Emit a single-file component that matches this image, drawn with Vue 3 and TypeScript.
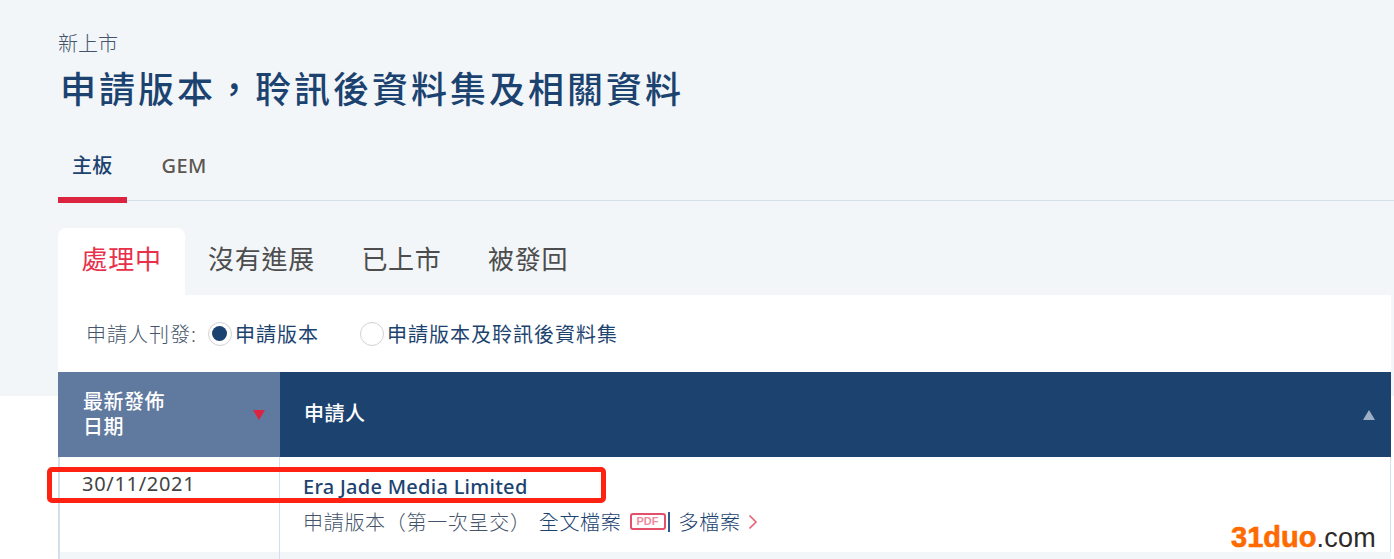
<script setup lang="ts">
const boards = ['主板', 'GEM'];
const statuses = ['處理中', '沒有進展', '已上市', '被發回'];
</script>

<template>
  <div class="page">
    <header class="head">
      <div class="crumb">新上市</div>
      <h1 class="title">申請版本，聆訊後資料集及相關資料</h1>
      <nav class="boards">
        <span v-for="(b, i) in boards" :key="b" class="board" :class="{ active: i === 0 }">{{ b }}</span>
      </nav>
    </header>

    <div class="body">
      <ul class="status-tabs">
        <li v-for="(s, i) in statuses" :key="s" class="status" :class="{ active: i === 0 }">{{ s }}</li>
      </ul>

      <section class="panel">
        <div class="filter">
          <span class="filter-label">申請人刊發:</span>
          <span class="radio checked"></span>
          <span class="radio-text first">申請版本</span>
          <span class="radio"></span>
          <span class="radio-text">申請版本及聆訊後資料集</span>
        </div>

        <div class="thead">
          <div class="col-date th-date">
            <span>最新發佈<br />日期</span>
            <i class="arrow down"></i>
          </div>
          <div class="col-name th-name">
            <span>申請人</span>
            <i class="arrow up"></i>
          </div>
        </div>

        <div class="row">
          <div class="col-date td-date">30/11/2021</div>
          <div class="col-name td-name">
            <div class="company">Era Jade Media Limited</div>
            <div class="doc">
              <span>申請版本（第一次呈交）</span>
              <span class="full">全文檔案</span>
              <span class="pdf">PDF</span>
              <span class="bar"></span>
              <span>多檔案</span>
              <svg class="chev" width="10" height="16" viewBox="0 0 10 16" fill="none">
                <path d="M1.5 1.5L8 8L1.5 14.5" stroke="#ea5f76" stroke-width="1.6" />
              </svg>
            </div>
          </div>
        </div>
        <div class="next-row">
          <div class="col-date"></div>
          <div class="col-name"></div>
        </div>
      </section>
    </div>

    <div class="highlight"></div>
    <div class="watermark"><b>31duo</b>.com</div>
  </div>
</template>

<style>
html,
body {
  margin: 0;
  background: #fff;
}
</style>

<style scoped>
.page {
  position: relative;
  width: 1394px;
  height: 559px;
  overflow: hidden;
  font-family: "Noto Sans", "Noto Sans CJK TC", sans-serif;
  background: linear-gradient(#f2f6f9 396px, #fff 396px);
}
.head {
  padding: 29px 0 0 58px;
}
.crumb {
  font-size: 20px;
  line-height: 29px;
  font-weight: 300;
  color: #44546a;
}
.title {
  margin: 7px 0 0 2px;
  font-size: 36px;
  line-height: 50px;
  font-weight: 500;
  letter-spacing: 3px;
  color: #1c4370;
}
.boards {
  display: flex;
  margin-top: 23px;
  height: 63px;
  border-bottom: 1px solid #d5dfea;
  box-sizing: border-box;
}
.board {
  box-sizing: border-box;
  height: 65px;
  padding: 13px 14px 0;
  font-size: 20px;
  line-height: 29px;
  font-weight: 500;
  letter-spacing: 0.3px;
  color: #5d5650;
  margin-right: 21px;
}
.board.active {
  color: #1c4370;
  border-bottom: 6px solid #dc2340;
}
.status-tabs {
  display: flex;
  margin: 27px 0 0 58px;
  padding: 0;
  list-style: none;
  height: 67px;
}
.status {
  padding: 0 23px 0 23.5px;
  font-size: 26px;
  line-height: 63px;
  letter-spacing: 0.7px;
  color: #4d4d4d;
}
.status.active {
  background: #fff;
  color: #e8304a;
  border-radius: 8px 8px 0 0;
}
.panel {
  margin-left: 58px;
  width: 1333px;
  background: #fff;
}
.filter {
  display: flex;
  align-items: center;
  height: 77px;
  padding: 0 0 0 28px;
  font-size: 20px;
  color: #1c4370;
  box-sizing: border-box;
}
.filter-label {
  font-size: 20px;
  font-weight: 300;
  letter-spacing: 1px;
  color: #44546a;
  margin-right: 11px;
}
.radio {
  box-sizing: border-box;
  width: 24px;
  height: 24px;
  border: 1px solid #d2d2d2;
  border-radius: 50%;
  background: #fff;
  margin-right: 3px;
  display: flex;
  align-items: center;
  justify-content: center;
}
.radio.checked::after {
  content: "";
  width: 15px;
  height: 15px;
  border-radius: 50%;
  background: #1c4370;
}
.radio-text {
  letter-spacing: 1px;
}
.radio-text.first {
  margin-right: 41px;
}
.thead {
  display: flex;
  height: 85px;
  color: #fff;
  font-size: 20px;
  font-weight: 500;
  line-height: 25px;
  letter-spacing: 0.5px;
}
.col-date {
  box-sizing: border-box;
  width: 222px;
  flex: none;
}
.col-name {
  flex: 1;
  box-sizing: border-box;
}
.th-date {
  display: flex;
  align-items: center;
  justify-content: space-between;
  padding: 0 15px 0 25px;
  background: #607a9f;
}
.th-date span {
  margin-top: -2px;
}
.th-name {
  display: flex;
  align-items: center;
  justify-content: space-between;
  padding: 0 16px 0 24px;
  background: #1c4370;
}
.th-name span {
  margin-top: -2px;
}
.arrow {
  width: 0;
  height: 0;
  border-left: 6px solid transparent;
  border-right: 6px solid transparent;
}
.arrow.down {
  border-top: 10px solid #dc2340;
}
.arrow.up {
  border-bottom: 10px solid #9fb0c6;
}
.row {
  display: flex;
  height: 95px;
  border-left: 2px solid #d5dfea;
  border-right: 1px solid #d5dfea;
}
.td-date {
  width: 220px;
  padding: 13px 0 0 22px;
  font-size: 20px;
  line-height: 28px;
  color: #444;
  letter-spacing: 0.7px;
  border-right: 1px solid #d5dfea;
}
.td-name {
  padding: 15px 0 0 23px;
}
.company {
  font-size: 20px;
  line-height: 29px;
  font-weight: 500;
  letter-spacing: 0.28px;
  color: #1c4370;
}
.doc {
  display: flex;
  align-items: center;
  margin-top: 6px;
  height: 29px;
  font-size: 20px;
  font-weight: 300;
  letter-spacing: 0.7px;
  color: #1c4370;
}
.doc > span:first-child {
  color: #44546a;
}
.full {
  margin-left: 8px;
}
.pdf {
  box-sizing: border-box;
  width: 36px;
  height: 17px;
  margin-left: 8px;
  border: 2px solid #e4506a;
  border-radius: 3px;
  font-family: "Liberation Sans", sans-serif;
  font-size: 11px;
  line-height: 13px;
  font-weight: 700;
  letter-spacing: 0;
  text-align: center;
  color: #ee8b9c;
}
.bar {
  width: 2px;
  height: 20px;
  margin: 0 9px 0 2px;
  background: #2f5a8c;
}
.chev {
  margin-left: 7px;
}
.next-row {
  display: flex;
  height: 20px;
  background: #f2f6f9;
  border-left: 2px solid #d5dfea;
}
.next-row .col-date {
  width: 220px;
  border-right: 1px solid #d5dfea;
}
.highlight {
  position: absolute;
  left: 47px;
  top: 467px;
  width: 559px;
  height: 36px;
  box-sizing: border-box;
  border: 5px solid #ff2111;
  border-radius: 5px;
}
.watermark {
  position: absolute;
  left: 1231px;
  top: 519px;
  font-family: "Liberation Sans", sans-serif;
  font-size: 27px;
  line-height: 36px;
  letter-spacing: 0.3px;
  color: #2e2a27;
}
.watermark b {
  font-size: 29px;
  letter-spacing: 0;
  color: #ff6a00;
  -webkit-text-stroke: 0.6px #ff6a00;
}
</style>
